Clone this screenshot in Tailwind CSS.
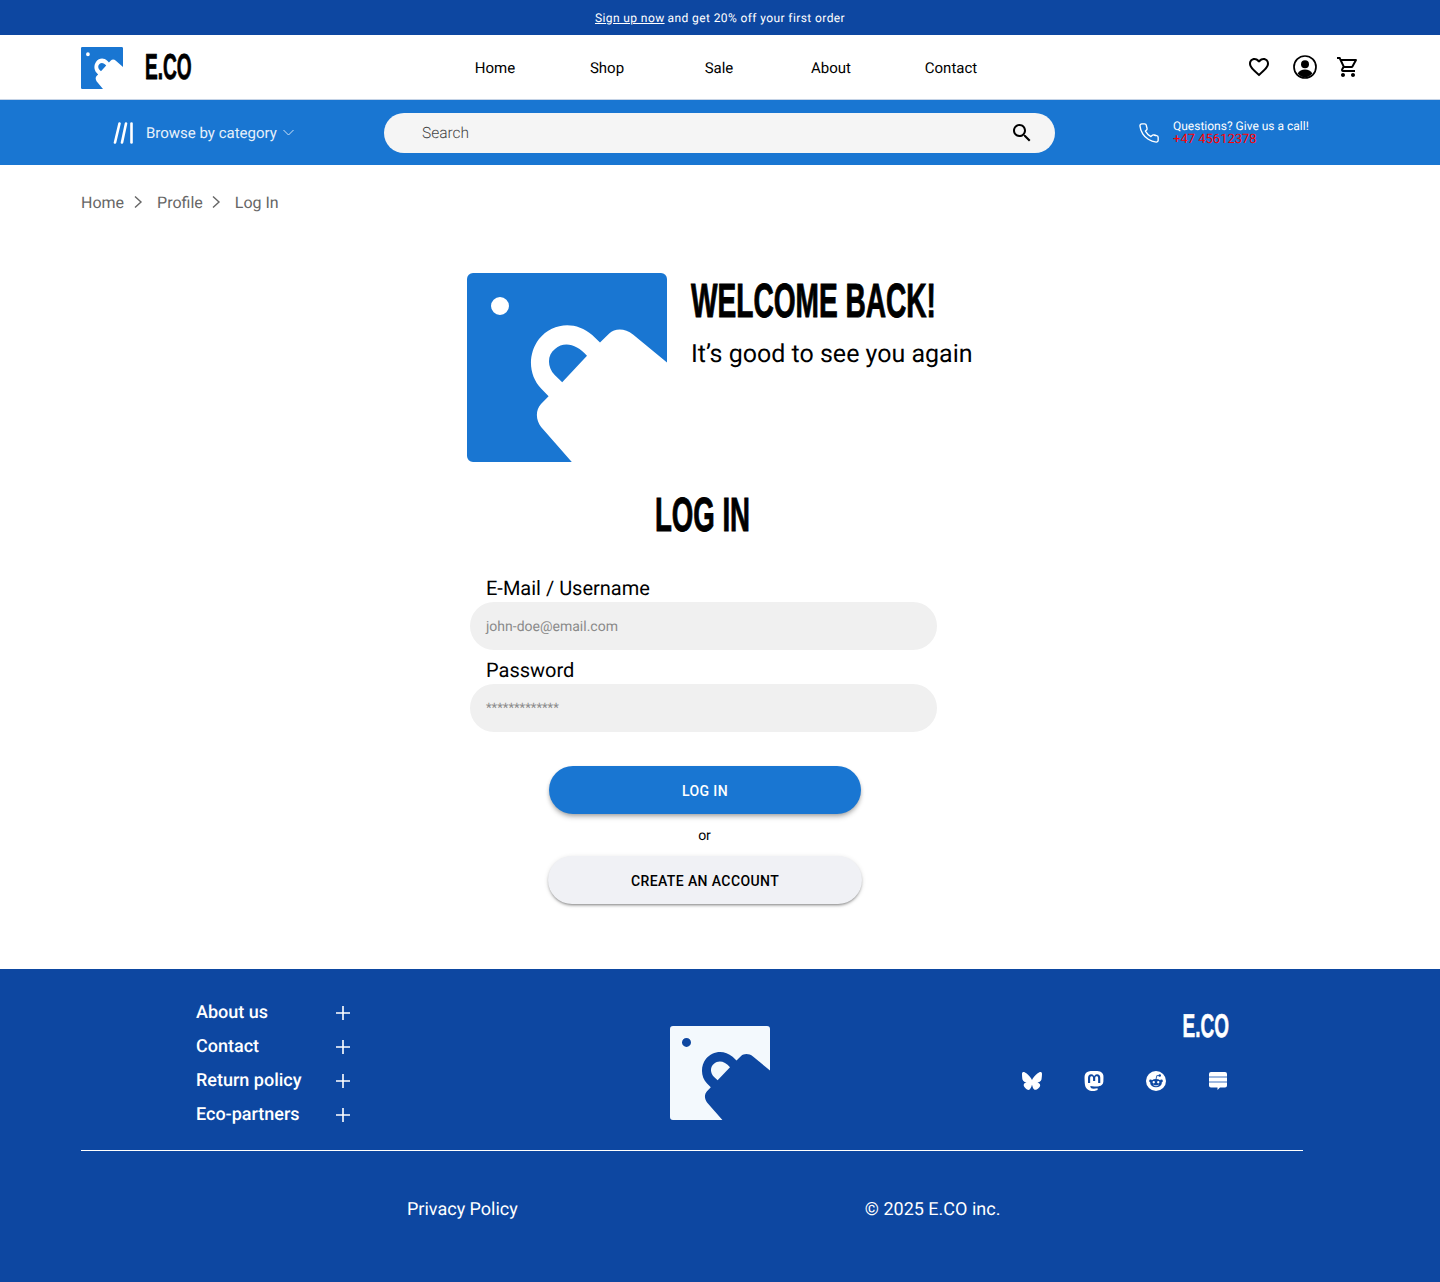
<!DOCTYPE html>
<html lang="en">
<head>
    <meta charset="UTF-8">
    <meta name="viewport" content="width=device-width, initial-scale=1.0">
    <title>Log In - E.CO</title>
    <script src="https://cdn.jsdelivr.net/npm/@tailwindcss/browser@4"></script>
</head>
<body class="bg-white font-['Roboto',sans-serif] text-black [text-rendering:geometricPrecision]">
    <svg class="hidden">
        <symbol id="eco-logo" viewBox="0 0 200 189" preserveAspectRatio="none">
            <path fill="currentColor" fill-rule="evenodd" d="M6 0H194a6 6 0 0 1 6 6V89.5L166 61.4C158 55 148 55 142.2 60.4L133 69.5L125.2 62C108 47 85 50 72 66C60 82 62 103 74.1 115.5L81.6 123.2L74 131C68 138 69 147 74.1 153.9L104.8 189H6a6 6 0 0 1-6-6V6a6 6 0 0 1 6-6ZM120 82.8L95.2 109.2L87.7 102C80 94 80 82 88 76C97 68 110 71 120 82.8ZM24 33a9 9 0 1 0 18 0a9 9 0 1 0-18 0Z"/>
        </symbol>
    </svg>

    <!-- promo bar -->
    <div class="h-[35px] bg-[#0d47a1] flex items-center justify-center text-white text-[12px] tracking-[0.4px]">
        <a href="#" class="underline">Sign up now</a><span class="ml-[3px]">and get 20% off your first order</span>
    </div>

    <!-- header -->
    <header class="h-[65px] bg-white border-b border-[#c5d3e6] flex items-center pl-[81px] pr-[81px]">
        <svg class="mt-[2px] w-[42px] h-[42px] text-[#1976d2]"><use href="#eco-logo"/></svg>
        <span class="ml-[22px] w-[294px] font-['Liberation_Sans',sans-serif] font-bold text-[36px] origin-left scale-x-[0.53] leading-none [-webkit-text-stroke:0.8px_#000]">E.CO</span>
        <nav class="pt-[3px] flex text-[15px]">
            <a href="#" class="w-[112px] text-center">Home</a>
            <a href="#" class="w-[112px] text-center">Shop</a>
            <a href="#" class="w-[112px] text-center">Sale</a>
            <a href="#" class="w-[112px] text-center">About</a>
            <a href="#" class="w-[112px] pl-[16px] text-center">Contact</a>
        </nav>
        <div class="ml-auto mr-[-1px] flex items-center">
            <svg class="w-[24px] h-[24px]" viewBox="0 0 24 24" fill="currentColor"><path d="M16.5 3c-1.74 0-3.41.81-4.5 2.09C10.91 3.81 9.24 3 7.5 3 4.42 3 2 5.42 2 8.5c0 3.78 3.4 6.86 8.55 11.54L12 21.35l1.45-1.32C18.6 15.36 22 12.28 22 8.5 22 5.42 19.58 3 16.5 3zm-4.4 15.55l-.1.1-.1-.1C7.14 14.24 4 11.39 4 8.5 4 6.5 5.5 5 7.5 5c1.54 0 3.04.99 3.57 2.36h1.87C13.46 5.99 14.96 5 16.5 5c2 0 3.5 1.5 3.5 3.5 0 2.89-3.14 5.74-7.9 10.05z"/></svg>
            <svg class="ml-[22px] w-[24px] h-[24px]" viewBox="0 0 24 24"><circle cx="12" cy="12" r="11" fill="none" stroke="currentColor" stroke-width="1.7"/><circle cx="12" cy="9.3" r="4" fill="currentColor"/><path fill="currentColor" d="M4.6 18.6C6 15.6 9 14.5 12 14.5s6 1.1 7.4 4.1A10.4 10.4 0 0 1 12 22.4a10.4 10.4 0 0 1-7.4-3.8Z"/></svg>
            <svg class="ml-[19px] w-[24px] h-[24px]" viewBox="0 0 24 24" fill="currentColor"><path d="M15.55 13c.75 0 1.41-.41 1.75-1.03l3.58-6.49c.37-.66-.11-1.48-.87-1.48H5.21l-.94-2H1v2h2l3.6 7.59-1.35 2.44C4.52 15.37 5.48 17 7 17h12v-2H7l1.1-2h7.45zM6.16 6h12.15l-2.76 5H8.53L6.16 6zM7 18c-1.1 0-1.99.9-1.99 2S5.9 22 7 22s2-.9 2-2-.9-2-2-2zm10 0c-1.1 0-1.99.9-1.99 2s.89 2 1.99 2 2-.9 2-2-.9-2-2-2z"/></svg>
        </div>
    </header>

    <!-- category and search bar -->
    <div class="h-[65px] bg-[#1976d2] flex items-center text-white">
        <div class="w-[384px] pl-[113px] flex items-center">
            <svg class="w-[21px] h-[22px]" viewBox="0 0 21 22" fill="none" stroke="white" stroke-width="2.6" stroke-linecap="round"><path d="M6.5 1.5L2 20.5"/><path d="M13 1.5L9 20.5"/><path d="M18.5 1.5V20.5"/></svg>
            <span class="ml-[12px] pt-[1px] text-[15px] text-[#e6f0fa]">Browse by category</span>
            <svg class="ml-[6px] w-[11px] h-[7px]" viewBox="0 0 11 7" fill="none" stroke="#cfe2f6" stroke-width="1"><path d="M0.5 1L5.5 6L10.5 1"/></svg>
        </div>
        <div class="w-[671px] h-[40px] rounded-full bg-[#f5f5f5] flex items-center pl-[38px] pr-[21px]">
            <span class="pt-[3px] text-[15.5px] font-light text-[#444]">Search</span>
            <svg class="ml-auto w-[24px] h-[24px] text-black" viewBox="0 0 24 24" fill="currentColor"><path d="M15.5 14h-.79l-.28-.27C15.41 12.59 16 11.11 16 9.5 16 5.91 13.09 3 9.5 3S3 5.91 3 9.5 5.91 16 9.5 16c1.61 0 3.09-.59 4.23-1.57l.27.28v.79l5 4.99L20.49 19l-4.99-5zm-6 0C7.01 14 5 11.99 5 9.5S7.01 5 9.5 5 14 7.01 14 9.5 11.99 14 9.5 14z"/></svg>
        </div>
        <svg class="ml-[83px] w-[22px] h-[22px]" viewBox="0 0 24 24" fill="none" stroke="white" stroke-width="1.5" stroke-linejoin="round"><path d="M22 16.92v3a2 2 0 0 1-2.18 2 19.79 19.79 0 0 1-8.63-3.07 19.5 19.5 0 0 1-6-6 19.79 19.79 0 0 1-3.07-8.67A2 2 0 0 1 4.11 2h3a2 2 0 0 1 2 1.72 12.84 12.84 0 0 0 .7 2.81 2 2 0 0 1-.45 2.11L8.09 9.91a16 16 0 0 0 6 6l1.27-1.27a2 2 0 0 1 2.11-.45 12.84 12.84 0 0 0 2.81.7A2 2 0 0 1 22 16.92z"/></svg>
        <div class="ml-[13px] pt-[1px]">
            <div class="text-[12px] leading-[12px]">Questions? Give us a call!</div>
            <div class="mt-[1px] text-[13px] leading-[13px] text-[#ff0000]">+47 45612378</div>
        </div>
    </div>

    <main class="h-[804px]">
        <!-- breadcrumb -->
        <div class="pl-[81px] pt-[28px] h-[108px] flex items-start text-[16px] leading-[20px] text-[#666]">
            <a href="#">Home</a>
            <svg class="ml-[7px] mr-[12px] mt-[2px] w-[14px] h-[14px]" viewBox="0 0 14 14" fill="none" stroke="#666" stroke-width="1.4"><path d="M4 1.5L10 7L4 12.5"/></svg>
            <a href="#">Profile</a>
            <svg class="ml-[6px] mr-[12px] mt-[2px] w-[14px] h-[14px]" viewBox="0 0 14 14" fill="none" stroke="#666" stroke-width="1.4"><path d="M4 1.5L10 7L4 12.5"/></svg>
            <span>Log In</span>
        </div>

        <!-- welcome -->
        <div class="ml-[467px] flex items-start">
            <svg class="w-[200px] h-[189px] text-[#1976d2] shrink-0"><use href="#eco-logo"/></svg>
            <div class="ml-[24px] pt-[1px]">
                <h1 class="h-[58px] font-['Liberation_Sans',sans-serif] font-bold text-[48px] leading-[56px] origin-left scale-x-[0.585] whitespace-nowrap [-webkit-text-stroke:1px_#000]">WELCOME BACK!</h1>
                <p class="mt-[8px] text-[25px] leading-[30px] whitespace-nowrap">It’s good to see you again</p>
            </div>
        </div>

        <!-- login form -->
        <form class="ml-[470px] w-[467px] mt-[25px]">
            <h2 class="h-[56px] pt-[1px] text-center font-['Liberation_Sans',sans-serif] font-bold text-[48px] leading-[56px] scale-x-[0.575] ml-[-2px] [-webkit-text-stroke:1px_#000]">LOG IN</h2>
            <label class="block mt-[33px] pl-[16px] h-[26px] text-[20px] leading-[24px]">E-Mail / Username</label>
            <div class="h-[48px] pt-[2px] rounded-full bg-[#f0f0f0] flex items-center pl-[16px] text-[14px] text-[#8a8a8a]">john-doe@email.com</div>
            <label class="block mt-[8px] pl-[16px] h-[26px] text-[20px] leading-[24px]">Password</label>
            <div class="h-[48px] pt-[2px] rounded-full bg-[#f0f0f0] flex items-center pl-[16px] text-[13px] text-[#8a8a8a]">*************</div>
            <div class="mt-[34px] flex flex-col items-center">
                <button type="button" class="w-[312px] h-[48px] pt-[2px] rounded-full bg-[#1976d2] text-white text-[14px] font-medium tracking-[0.4px] shadow-[0_2px_4px_-1px_rgba(0,0,0,0.3),0_4px_5px_0_rgba(0,0,0,0.14)] ml-[3px]">LOG IN</button>
                <span class="mt-[13px] h-[18px] text-[14px] leading-[18px] ml-[2px]">or</span>
                <button type="button" class="mt-[11px] w-[314px] h-[48px] pt-[2px] rounded-full bg-[#f0f1f5] text-[14px] font-medium tracking-[0.4px] shadow-[0_2px_3px_-1px_rgba(0,0,0,0.45),0_1px_5px_0_rgba(0,0,0,0.12)] ml-[3px]">CREATE AN ACCOUNT</button>
            </div>
        </form>
    </main>

    <footer class="h-[313px] bg-[#0d47a1] text-white pt-[27px]">
        <div class="h-[154px] flex px-[81px]">
            <ul class="ml-[115px] w-[155px] h-[136px] text-[18px] font-medium">
                <li class="h-[34px] flex items-center justify-between"><span class="mb-[1px]">About us</span><svg class="w-[14px] h-[14px] mr-[1px]" viewBox="0 0 14 14" stroke="white" stroke-width="1.6"><path d="M0 7H14M7 0V14"/></svg></li>
                <li class="h-[34px] flex items-center justify-between"><span class="mb-[1px]">Contact</span><svg class="w-[14px] h-[14px] mr-[1px]" viewBox="0 0 14 14" stroke="white" stroke-width="1.6"><path d="M0 7H14M7 0V14"/></svg></li>
                <li class="h-[34px] flex items-center justify-between"><span class="mb-[1px]">Return policy</span><svg class="w-[14px] h-[14px] mr-[1px]" viewBox="0 0 14 14" stroke="white" stroke-width="1.6"><path d="M0 7H14M7 0V14"/></svg></li>
                <li class="h-[34px] flex items-center justify-between"><span class="mb-[1px]">Eco-partners</span><svg class="w-[14px] h-[14px] mr-[1px]" viewBox="0 0 14 14" stroke="white" stroke-width="1.6"><path d="M0 7H14M7 0V14"/></svg></li>
            </ul>
            <svg class="ml-[319px] mt-[30px] w-[100px] h-[94px] text-[#f3f9fd]"><use href="#eco-logo"/></svg>
            <div class="ml-[252px] w-[206px]">
                <div class="mt-[12px] mr-[-1px] h-[36px] text-right font-['Liberation_Sans',sans-serif] font-bold text-[33px] leading-[36px] origin-right scale-x-[0.575] [-webkit-text-stroke:0.6px_#fff]">E.CO</div>
                <div class="mt-[27px] flex items-center justify-between">
                    <svg class="w-[20px] h-[20px]" viewBox="0 0 24 24" fill="white"><path d="M12 10.8c-1.087-2.114-4.046-6.053-6.798-7.995C2.566.944 1.561 1.266.902 1.565.139 1.908 0 3.08 0 3.768c0 .69.378 5.65.624 6.479.815 2.736 3.713 3.66 6.383 3.364.136-.02.275-.039.415-.056-.138.022-.276.04-.415.056-3.912.58-7.387 2.005-2.83 7.078 5.013 5.19 6.87-1.113 7.823-4.308.953 3.195 2.05 9.271 7.733 4.308 4.267-4.308 1.172-6.498-2.74-7.078a8.741 8.741 0 0 1-.415-.056c.14.017.279.036.415.056 2.67.297 5.568-.628 6.383-3.364.246-.828.624-5.79.624-6.479 0-.688-.139-1.86-.902-2.203-.659-.299-1.664-.621-4.3 1.24C16.046 4.748 13.087 8.687 12 10.8Z"/></svg>
                    <svg class="w-[20px] h-[20px]" viewBox="0 0 24 24" fill="white"><path d="M23.268 5.313c-.35-2.578-2.617-4.61-5.304-5.004C17.51.242 15.792 0 11.813 0h-.03c-3.98 0-4.835.242-5.288.309C3.882.692 1.496 2.518.917 5.127.64 6.412.61 7.837.661 9.143c.074 1.874.088 3.745.26 5.611.118 1.24.325 2.47.62 3.68.55 2.237 2.777 4.098 4.96 4.857 2.336.792 4.849.923 7.256.38.265-.061.527-.132.786-.213.585-.184 1.27-.39 1.774-.753a.057.057 0 0 0 .023-.043v-1.809a.052.052 0 0 0-.02-.041.053.053 0 0 0-.046-.01 20.282 20.282 0 0 1-4.709.545c-2.73 0-3.463-1.284-3.674-1.818a5.593 5.593 0 0 1-.319-1.433.053.053 0 0 1 .066-.054c1.517.363 3.072.546 4.632.546.376 0 .75 0 1.125-.01 1.57-.044 3.224-.124 4.768-.422.038-.008.077-.015.11-.024 2.435-.464 4.753-1.92 4.989-5.604.008-.145.03-1.52.03-1.67.002-.512.167-3.63-.024-5.545zm-3.748 9.195h-2.561V8.29c0-1.309-.55-1.976-1.67-1.976-1.23 0-1.846.79-1.846 2.35v3.403h-2.546V8.663c0-1.56-.617-2.35-1.848-2.35-1.112 0-1.668.668-1.67 1.977v6.218H4.822V8.102c0-1.31.337-2.35 1.011-3.12.696-.77 1.608-1.164 2.74-1.164 1.311 0 2.302.5 2.962 1.498l.638 1.06.638-1.06c.66-.999 1.65-1.498 2.96-1.498 1.13 0 2.043.395 2.74 1.164.675.77 1.012 1.81 1.012 3.12z"/></svg>
                    <svg class="w-[20px] h-[20px]" viewBox="0 0 24 24"><circle cx="12" cy="12" r="12" fill="white"/><ellipse cx="12" cy="14.5" rx="7" ry="5" fill="#0d47a1"/><circle cx="5.5" cy="12" r="1.7" fill="#0d47a1"/><circle cx="18.5" cy="12" r="1.7" fill="#0d47a1"/><circle cx="16.5" cy="5.5" r="1.5" fill="#0d47a1"/><path d="M12 10L13 5.5L16.5 5.5" fill="none" stroke="#0d47a1" stroke-width="1"/><circle cx="9.3" cy="13.5" r="1.4" fill="white"/><circle cx="14.7" cy="13.5" r="1.4" fill="white"/><path d="M9 16.8C10.5 18 13.5 18 15 16.8" fill="none" stroke="white" stroke-width="1"/></svg>
                    <svg class="w-[20px] h-[20px]" viewBox="0 0 20 20"><path fill="white" d="M3 1H17a2 2 0 0 1 2 2V14.5a2 2 0 0 1-2 2H12L9.5 19V16.5H3a2 2 0 0 1-2-2V3a2 2 0 0 1 2-2Z"/><path stroke="#7fa3d6" stroke-width="1.4" d="M1 6H19M1 11H19"/></svg>
                </div>
            </div>
        </div>
        <div class="mx-[81px] w-[1222px] h-px bg-white"></div>
        <div class="flex pl-[407px] pt-[48px] text-[18px] leading-[22px]">
            <a href="#">Privacy Policy</a>
            <span class="ml-[347px]">© 2025 E.CO inc.</span>
        </div>
    </footer>
</body>
</html>
